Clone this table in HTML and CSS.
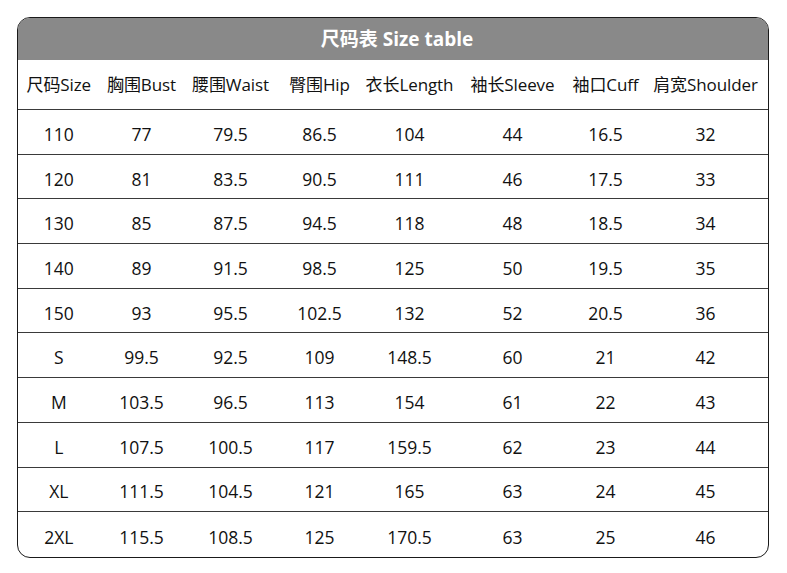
FILE: index.html
```html
<!DOCTYPE html>
<html lang="zh">
<head>
<meta charset="utf-8">
<link rel="stylesheet" href="styles.css">
</head>
<body>
<div class="card">
  <div class="title">尺码表 Size table</div>
  <div class="row head">
    <div>尺码Size</div><div>胸围Bust</div><div>腰围Waist</div><div>臀围Hip</div><div>衣长Length</div><div>袖长Sleeve</div><div>袖口Cuff</div><div>肩宽Shoulder</div>
  </div>
  <div class="row"><div>110</div><div>77</div><div>79.5</div><div>86.5</div><div>104</div><div>44</div><div>16.5</div><div>32</div></div>
  <div class="row"><div>120</div><div>81</div><div>83.5</div><div>90.5</div><div>111</div><div>46</div><div>17.5</div><div>33</div></div>
  <div class="row"><div>130</div><div>85</div><div>87.5</div><div>94.5</div><div>118</div><div>48</div><div>18.5</div><div>34</div></div>
  <div class="row"><div>140</div><div>89</div><div>91.5</div><div>98.5</div><div>125</div><div>50</div><div>19.5</div><div>35</div></div>
  <div class="row"><div>150</div><div>93</div><div>95.5</div><div>102.5</div><div>132</div><div>52</div><div>20.5</div><div>36</div></div>
  <div class="row"><div>S</div><div>99.5</div><div>92.5</div><div>109</div><div>148.5</div><div>60</div><div>21</div><div>42</div></div>
  <div class="row"><div>M</div><div>103.5</div><div>96.5</div><div>113</div><div>154</div><div>61</div><div>22</div><div>43</div></div>
  <div class="row"><div>L</div><div>107.5</div><div>100.5</div><div>117</div><div>159.5</div><div>62</div><div>23</div><div>44</div></div>
  <div class="row"><div>XL</div><div>111.5</div><div>104.5</div><div>121</div><div>165</div><div>63</div><div>24</div><div>45</div></div>
  <div class="row last"><div>2XL</div><div>115.5</div><div>108.5</div><div>125</div><div>170.5</div><div>63</div><div>25</div><div>46</div></div>
</div>
</body>
</html>
```
FILE: styles.css
```css
html, body {
  margin: 0;
  padding: 0;
  background: #ffffff;
}
body {
  padding: 17px 0 0 17px;
  font-family: "Open Sans", "Noto Sans CJK SC", sans-serif;
  color: #111111;
}
.card {
  width: 752px;
  height: 541px;
  box-sizing: border-box;
  border: 1.5px solid #1a1a1a;
  border-radius: 13px;
  overflow: hidden;
  display: flex;
  flex-direction: column;
}
.title {
  height: 42px;
  flex: none;
  background: #898989;
  color: #ffffff;
  font-weight: 700;
  font-size: 19px;
  display: flex;
  align-items: center;
  justify-content: center;
  padding: 0 0 2px 8px;
  box-sizing: border-box;
}
.row {
  display: grid;
  grid-template-columns: 81.5px 84px 94px 84px 96px 110px 76px 124px;
  align-items: center;
  justify-items: center;
  height: 44.7px;
  flex: none;
  box-sizing: border-box;
  border-bottom: 1px solid #3a3a3a;
  padding-top: 4px;
  font-size: 17.5px;
  white-space: nowrap;
}
.row.head {
  height: 50px;
  padding-top: 0;
  padding-bottom: 3px;
  font-size: 17px;
  letter-spacing: -0.1px;
}
.row.last {
  border-bottom: none;
  flex: 1;
}
```
